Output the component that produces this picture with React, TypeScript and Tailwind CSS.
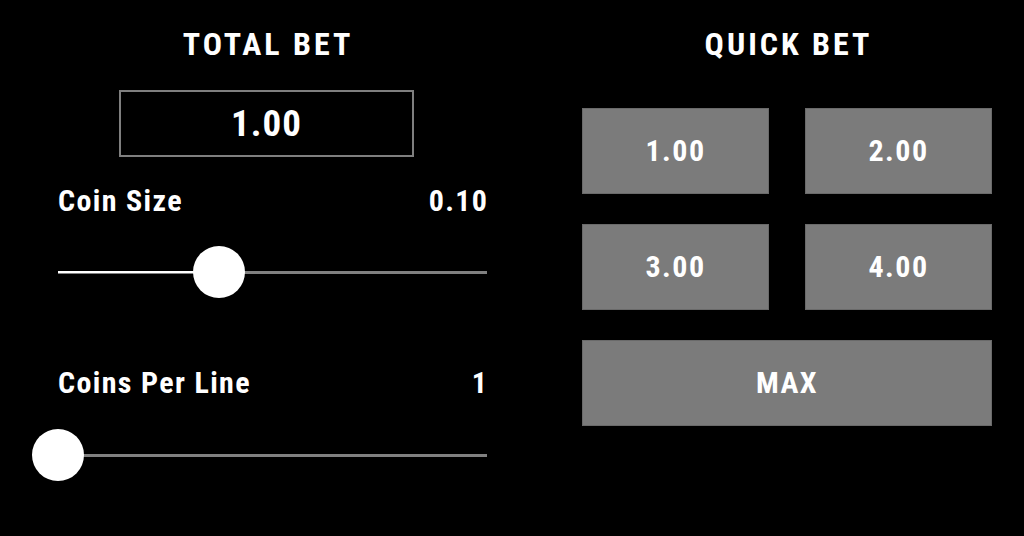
import React from "react";

function Slider({ pct }: { pct: number }) {
  return (
    <div className="relative h-[52px] w-full">
      <div className="absolute left-0 right-0 top-[25px] h-[3px] bg-[#808080]" />
      <div className="absolute left-0 top-[25px] h-[2px] bg-white" style={{ width: `${pct}%` }} />
      <div
        className="absolute top-0 h-[52px] w-[52px] -translate-x-1/2 rounded-full bg-white"
        style={{ left: `${pct}%` }}
      />
    </div>
  );
}

function QuickButton({ label, className = "" }: { label: string; className?: string }) {
  return (
    <div
      className={`flex h-[86px] items-center justify-center border border-[#6a6a6a] bg-[#7b7b7b] text-[30px] leading-[30px] tracking-[1.5px] ${className}`}
    >
      {label}
    </div>
  );
}

export default function App() {
  return (
    <div className="flex h-[536px] w-[1024px] bg-black font-['Roboto',sans-serif] font-bold text-white font-stretch-condensed">
      <div className="ml-[58px] flex w-[429px] flex-col">
        <div className="ml-[61px] mt-[28px] flex w-[295px] flex-col">
          <div className="pl-[3px] text-center text-[32px] leading-[32px] tracking-[3px]">TOTAL BET</div>
          <div className="mt-[30px] flex h-[67px] items-center justify-center border-2 border-[#7f7f7f] text-[37px] leading-[37px] tracking-[1px]">
            1.00
          </div>
        </div>
        <div className="mt-[29px] flex justify-between text-[30px] leading-[30px] tracking-[1.35px]">
          <span>Coin Size</span>
          <span className="-mr-[1.35px]">0.10</span>
        </div>
        <div className="mt-[30px]">
          <Slider pct={37.5} />
        </div>
        <div className="mt-[70px] flex justify-between text-[30px] leading-[30px] tracking-[1.35px]">
          <span>Coins Per Line</span>
          <span className="-mr-[1.35px]">1</span>
        </div>
        <div className="mt-[31px]">
          <Slider pct={0} />
        </div>
      </div>
      <div className="ml-[95px] flex w-[410px] flex-col">
        <div className="mt-[28px] pl-[3px] text-center text-[32px] leading-[32px] tracking-[3px]">QUICK BET</div>
        <div className="mt-[48px] grid grid-cols-2 gap-x-[36px] gap-y-[30px]">
          <QuickButton label="1.00" />
          <QuickButton label="2.00" />
          <QuickButton label="3.00" />
          <QuickButton label="4.00" />
          <QuickButton label="MAX" className="col-span-2" />
        </div>
      </div>
    </div>
  );
}
